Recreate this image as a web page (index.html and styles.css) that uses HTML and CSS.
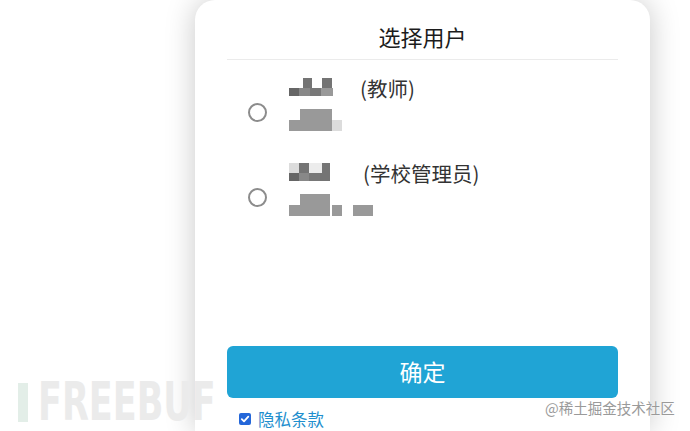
FILE: index.html
```html
<!DOCTYPE html>
<html lang="zh-CN">
<head>
<meta charset="utf-8">
<title>选择用户</title>
<link rel="stylesheet" href="styles.css">
</head>
<body>
<div class="page">
  <div class="card">
    <div class="header">选择用户</div>
    <div class="list">
      <div class="item">
        <span class="radio"></span>
        <div class="info">
          <div class="line1">
            <div class="mosaic">
              <div class="mrow ra">
                <span class="c w14"></span><span class="c w9 d"></span><span class="c w10"></span><span class="c w10 d"></span>
              </div>
              <div class="mrow rb">
                <span class="c w10 d2"></span><span class="c w11 d3"></span><span class="c w11 d4"></span><span class="c w12 g"></span>
              </div>
            </div>
            <span class="role">(教师)</span>
          </div>
          <div class="line2">
            <div class="mrow rc">
              <span class="c w11"></span><span class="c w32 g"></span>
            </div>
            <div class="mrow rd">
              <span class="c w43 g"></span><span class="c w10 l"></span>
            </div>
          </div>
        </div>
      </div>
      <div class="item">
        <span class="radio"></span>
        <div class="info">
          <div class="line1">
            <div class="mosaic">
              <div class="mrow ra">
                <span class="c w10 l"></span><span class="c w10 d"></span><span class="c w13 l2"></span><span class="c w8 d"></span>
              </div>
              <div class="mrow rb">
                <span class="c w10 d2"></span><span class="c w10 d3"></span><span class="c w11 d4"></span><span class="c w10 d"></span>
              </div>
            </div>
            <span class="role r2">(学校管理员)</span>
          </div>
          <div class="line2">
            <div class="mrow rc">
              <span class="c w11"></span><span class="c w30 g"></span>
            </div>
            <div class="mrow rd">
              <span class="c w41 g"></span><span class="c w2"></span><span class="c w10 g"></span><span class="c w11"></span><span class="c w20 g"></span>
            </div>
          </div>
        </div>
      </div>
    </div>
    <button class="confirm">确定</button>
    <div class="footer">
      <span class="check"><svg viewBox="0 0 12 12" width="12" height="12"><path d="M2.8 6.2 L5 8.4 L9.3 3.6" fill="none" stroke="#fff" stroke-width="1.8" stroke-linecap="round" stroke-linejoin="round"/></svg></span>
      <span class="terms">隐私条款</span>
    </div>
  </div>
</div>
<div class="wm-freebuf"><span class="bar"></span><span class="fb-text">FREEBUF</span></div>
<div class="wm-juejin">@稀土掘金技术社区</div>
</body>
</html>
```
FILE: styles.css
```css
html, body {
  margin: 0;
  padding: 0;
  background: #fff;
  overflow: hidden;
  height: 431px;
  font-family: "Noto Sans CJK SC", "Noto Sans", sans-serif;
}
.page {
  padding-left: 195px;
}
.card {
  width: 455px;
  height: 431px;
  box-sizing: border-box;
  background: #fff;
  border-radius: 20px 20px 0 0;
  box-shadow: 0 0 30px rgba(0, 0, 0, 0.22);
  padding: 0 32px 3px;
  display: flex;
  flex-direction: column;
}
.header {
  height: 60px;
  box-sizing: border-box;
  padding-top: 22px;
  line-height: 28px;
  font-size: 22px;
  color: #1c1c1c;
  text-align: center;
  border-bottom: 1px solid #ebebeb;
}
.list {
  flex: 1;
  padding: 17px 0 0 21px;
  display: flex;
  flex-direction: column;
  gap: 31px;
}
.item {
  display: flex;
  align-items: flex-start;
  gap: 22px;
}
.radio {
  width: 19px;
  height: 19px;
  box-sizing: border-box;
  border: 2px solid #8c8c8c;
  border-radius: 50%;
  margin-top: 26px;
  flex: none;
}
.info {
  display: flex;
  flex-direction: column;
  gap: 10px;
}
.line1 {
  display: flex;
  height: 22px;
  align-items: flex-start;
}
.mosaic {
  width: 71px;
  padding-top: 1px;
  flex: none;
}
.mrow {
  display: flex;
}
.ra { height: 10px; }
.rb { height: 8px; }
.rc { height: 11px; }
.rd { height: 11px; }
.c { display: block; height: 100%; flex: none; }
.w2 { width: 2px; }
.w8 { width: 8px; }
.w9 { width: 9px; }
.w10 { width: 10px; }
.w11 { width: 11px; }
.w12 { width: 12px; }
.w13 { width: 13px; }
.w14 { width: 14px; }
.w20 { width: 20px; }
.w30 { width: 30px; }
.w32 { width: 32px; }
.w41 { width: 41px; }
.w43 { width: 43px; }
.d { background: #747474; }
.d2 { background: #666; }
.d3 { background: #888; }
.d4 { background: #787878; }
.g { background: #999; }
.l { background: #dcdcdc; }
.l2 { background: #ececec; }
.role {
  font-size: 20.5px;
  line-height: 22px;
  color: #333;
}
.r2 { margin-left: 3px; }
.line2 {
  height: 22px;
}
.confirm {
  height: 52px;
  border: none;
  border-radius: 6px;
  background: #20a4d5;
  color: #fff;
  font-family: "Noto Sans CJK SC", "Noto Sans", sans-serif;
  font-size: 23px;
  padding: 0 0 3px;
  flex: none;
}
.footer {
  margin-top: 12px;
  height: 18px;
  display: flex;
  align-items: center;
  padding-left: 12px;
  gap: 7px;
}
.check {
  width: 12px;
  height: 12px;
  border-radius: 2px;
  background: #2467d9;
  display: flex;
}
.terms {
  font-size: 16.5px;
  line-height: 18px;
  color: #1f8fce;
}
.wm-freebuf {
  position: absolute;
  left: 18px;
  top: 383px;
  height: 39px;
  display: flex;
  align-items: center;
  gap: 10px;
}
.bar {
  width: 10px;
  height: 39px;
  background: #e3eee8;
}
.fb-text {
  font-family: "DejaVu Sans", sans-serif;
  font-weight: bold;
  font-size: 35px;
  line-height: 39px;
  color: #ebebeb;
  transform: scaleY(1.5);
}
.wm-juejin {
  position: absolute;
  left: 545px;
  top: 397px;
  font-size: 14.5px;
  line-height: 22px;
  color: #9a9a9a;
  text-shadow: 0 0 2px rgba(255, 255, 255, 0.8);
}
```
